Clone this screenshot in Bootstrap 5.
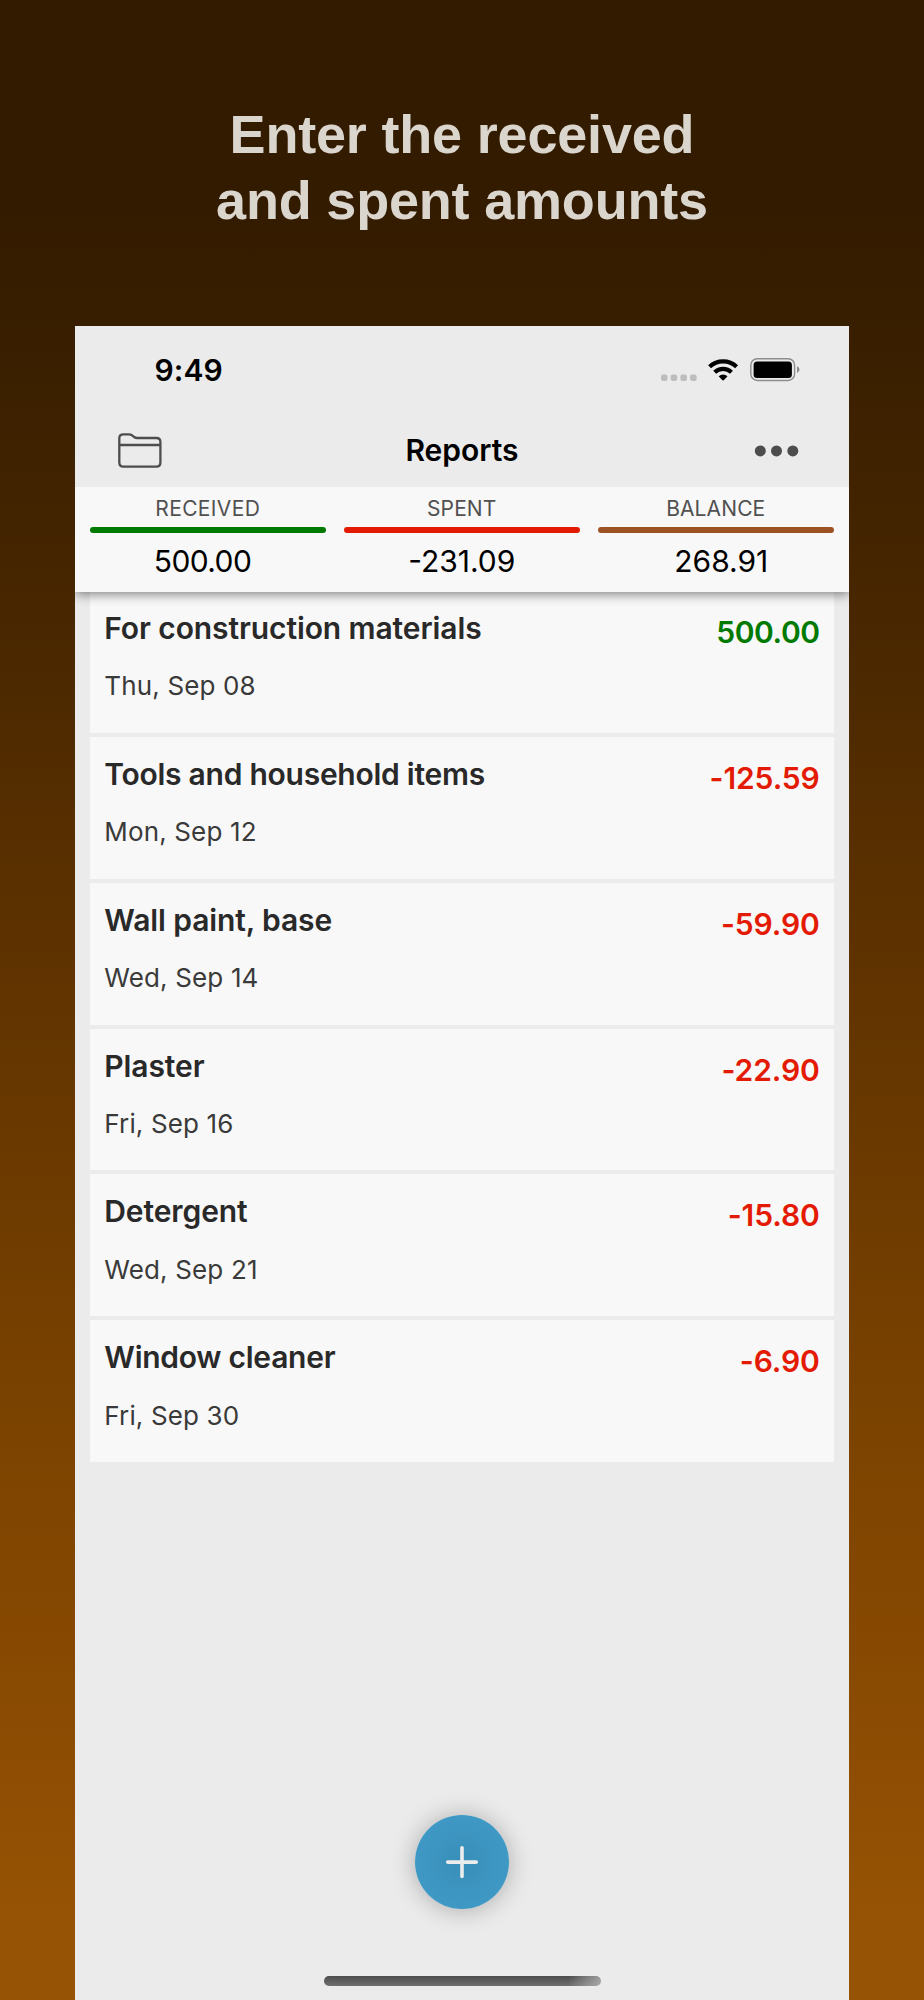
<!DOCTYPE html>
<html lang="en">
<head>
<meta charset="utf-8">
<meta name="viewport" content="width=device-width, initial-scale=1">
<title>Reports</title>
<link href="https://cdn.jsdelivr.net/npm/bootstrap@5.3.0/dist/css/bootstrap.min.css" rel="stylesheet">
<style>
  body { height: 2000px; overflow: hidden; font-family: Inter, "Noto Sans", sans-serif; font-size: 30px; color: #000;
    background: linear-gradient(#331b00 0, #331b00 10%, #391f00 17%, #472600 30%, #5a3000 44%, #7a4200 70%, #8b4b02 86%, #965305 96%, #965305 100%); }
  .headline { height: 326px; padding-top: 101px; font: 700 54px/66px "Liberation Sans", Arial, sans-serif; letter-spacing: -.19px; color: #dad5cd; }
  .phone { width: 774px; height: 1674px; margin-left: 75px; background: #ebebeb; }
  .status { height: 88px; padding: 0 49px 0 79.5px; letter-spacing: .1px; }
  .topnav { height: 73px; padding: 0 50px 0 42px; }
  .topnav-title { margin-left: 8px; }
  .summary { height: 105px; padding: 9px 15px 0 14.5px; gap: 17.5px; background: #f8f8f8; box-shadow: 0 2px 11px rgba(0,0,0,.5); clip-path: inset(0 0 -14px 0); z-index: 1; }
  .sum-label { font-size: 21px; line-height: 26px; color: #505050; letter-spacing: .12px; }
  .sum-label.wide { letter-spacing: .35px; }
  .sum-bar { height: 5.5px; margin-top: 5.3px; border-radius: 3px; }
  .sum-value { line-height: 56px; }
  .sum-value.received { letter-spacing: -.6px; margin-left: -10.5px; }
  .sum-value.balance { padding-left: 11px; }
  .green-bar { background: #007a00; } .red-bar { background: #e41b04; } .brown-bar { background: #9c5222; }
  .entries { margin: -1px 15px 0 14.5px; gap: 4px; }
  .entry { height: 141.85px; padding: 19px 14.3px 0 14.8px; background: #f8f8f8; }
  .entry-name { line-height: 36px; margin: 0 0 22.3px; font-size: 30px; font-weight: 600; letter-spacing: -.1px; color: #292929; }
  .entry-name.tight { letter-spacing: -.26px; }
  .entry-date { line-height: 36px; font-size: 26px; letter-spacing: .15px; color: #3a3a3a; }
  .amount { line-height: 36px; padding-top: 4px; font-weight: 600; letter-spacing: -.1px; }
  .plus { color: #007a00; letter-spacing: -.4px; } .minus { color: #e41b04; }
  .add { width: 94px; height: 94px; margin-top: 353px; border: 0; background: radial-gradient(circle, #388eb8 0, #3e97c3 60%, #429dca 100%); box-shadow: 0 1px 25px rgba(0,0,0,.28); }
  .home { width: 277px; height: 10px; margin-top: 67px; border-radius: 5px; background: linear-gradient(100deg, transparent 88%, rgba(190,190,190,.75) 100%), linear-gradient(#4c4c4c, #707070); }
</style>
</head>
<body>
<h1 class="headline text-center m-0">Enter the received<br>and spent amounts</h1>
<main class="phone d-flex flex-column">
  <header class="status d-flex align-items-center justify-content-between fw-semibold">
    <span>9:49</span>
    <svg width="140" height="26" viewBox="660 357 140 26">
      <g fill="#bdbdbd"><rect x="661" y="374.5" width="6.5" height="6.5" rx="2"/><rect x="670.7" y="374.5" width="6.5" height="6.5" rx="2"/><rect x="680.4" y="374.5" width="6.5" height="6.5" rx="2"/><rect x="690.1" y="374.5" width="6.5" height="6.5" rx="2"/></g>
      <g fill="none" stroke="#000" stroke-width="4.2"><path d="M709.6 366.7a19.6 19.6 0 0 1 27 0"/><path d="M714.7 372.3a12.2 12.2 0 0 1 16.8 0"/></g>
      <path d="M718.7 376.2a6.7 6.7 0 0 1 8.8 0l-3.5 3.8q-.9.9-1.8 0z"/>
      <rect x="750.8" y="358.7" width="43.8" height="21.8" rx="6.5" fill="none" stroke="#8d8d8d" stroke-width="1.4"/>
      <rect x="753.6" y="361.5" width="38.3" height="16.4" rx="3.5"/>
      <path d="M797 366.3q2.5 1 2.5 3.3t-2.5 3.3z" fill="#8d8d8d"/>
    </svg>
  </header>
  <nav class="topnav d-flex align-items-center justify-content-between">
    <svg width="45" height="37" viewBox="0 0 45 37" fill="none" stroke="#4d4d4d" stroke-width="2.3" stroke-linejoin="round">
      <path d="M2.3 30.5V6q0-3.700 4-3.700h5.5q1.8 0 3.200 1l2.200 1.700q1.200 1 3 1H39.400q4 0 4 4V30.500q0 4.200-4 4.200H6.300q-4 0-4-4.200zM2.300 13H43.400"/>
    </svg>
    <span class="topnav-title fw-semibold">Reports</span>
    <svg width="45" height="12" viewBox="0 0 45 12" fill="#4d4d4d"><circle cx="6.3" cy="5.9" r="5.5"/><circle cx="22.5" cy="5.9" r="5.5"/><circle cx="38.8" cy="5.9" r="5.5"/></svg>
  </nav>
  <section class="summary d-flex position-relative text-center">
    <div class="flex-fill w-100"><div class="sum-label wide">RECEIVED</div><div class="sum-bar green-bar"></div><div class="sum-value received">500.00</div></div>
    <div class="flex-fill w-100"><div class="sum-label">SPENT</div><div class="sum-bar red-bar"></div><div class="sum-value">-231.09</div></div>
    <div class="flex-fill w-100"><div class="sum-label">BALANCE</div><div class="sum-bar brown-bar"></div><div class="sum-value balance">268.91</div></div>
  </section>
  <section class="entries d-flex flex-column">
    <article class="entry d-flex justify-content-between"><div><h2 class="entry-name">For construction materials</h2><div class="entry-date">Thu, Sep 08</div></div><div class="amount plus">500.00</div></article>
    <article class="entry d-flex justify-content-between"><div><h2 class="entry-name tight">Tools and household items</h2><div class="entry-date">Mon, Sep 12</div></div><div class="amount minus">-125.59</div></article>
    <article class="entry d-flex justify-content-between"><div><h2 class="entry-name">Wall paint, base</h2><div class="entry-date">Wed, Sep 14</div></div><div class="amount minus">-59.90</div></article>
    <article class="entry d-flex justify-content-between"><div><h2 class="entry-name">Plaster</h2><div class="entry-date">Fri, Sep 16</div></div><div class="amount minus">-22.90</div></article>
    <article class="entry d-flex justify-content-between"><div><h2 class="entry-name">Detergent</h2><div class="entry-date">Wed, Sep 21</div></div><div class="amount minus">-15.80</div></article>
    <article class="entry d-flex justify-content-between"><div><h2 class="entry-name tight">Window cleaner</h2><div class="entry-date">Fri, Sep 30</div></div><div class="amount minus">-6.90</div></article>
  </section>
  <button class="add rounded-circle align-self-center d-flex align-items-center justify-content-center p-0" aria-label="Add">
    <svg width="34" height="34" viewBox="0 0 34 34" stroke="#ececec" stroke-width="3.6" stroke-linecap="round"><path d="M17 2.8v28.600M2.700 17.100h28.600"/></svg>
  </button>
  <div class="home align-self-center"></div>
</main>
<script src="https://cdn.jsdelivr.net/npm/bootstrap@5.3.0/dist/js/bootstrap.bundle.min.js"></script>
</body>
</html>
